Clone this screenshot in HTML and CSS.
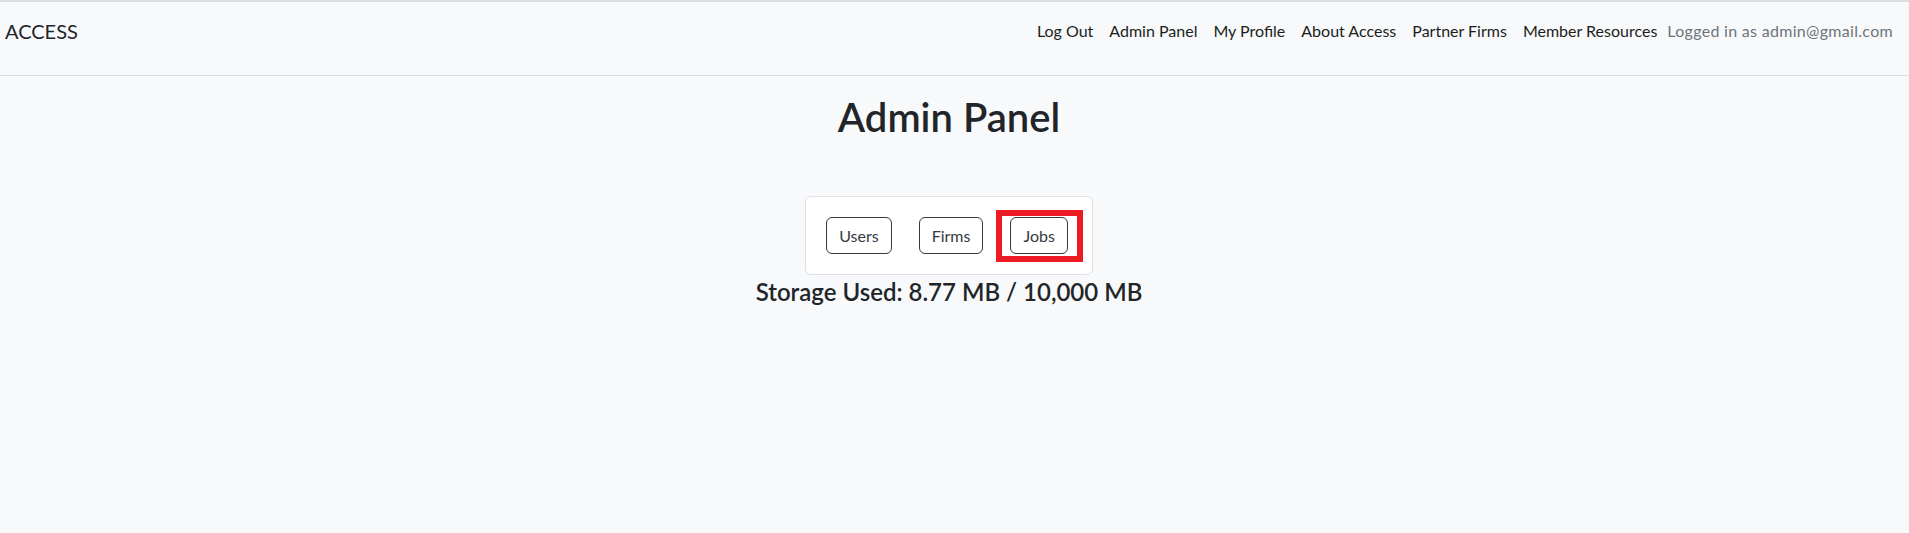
FILE: index.html
```html
<!DOCTYPE html>
<html lang="en">
<head>
<meta charset="utf-8">
<title>Admin Panel</title>
<link rel="stylesheet" href="styles.css">
</head>
<body>
<header class="navbar">
  <a class="brand" href="#">ACCESS</a>
  <nav class="nav">
    <a class="nav-link" href="#">Log Out</a>
    <a class="nav-link" href="#">Admin Panel</a>
    <a class="nav-link" href="#">My Profile</a>
    <a class="nav-link" href="#">About Access</a>
    <a class="nav-link" href="#">Partner Firms</a>
    <a class="nav-link" href="#">Member Resources</a>
    <span class="nav-text">Logged in as admin@gmail.com</span>
  </nav>
</header>
<main class="main">
  <h1 class="title">Admin Panel</h1>
  <div class="panel">
    <button class="btn">Users</button>
    <button class="btn">Firms</button>
    <button class="btn btn-marked">Jobs</button>
  </div>
  <h4 class="storage">Storage Used: 8.77 MB / 10,000 MB</h4>
</main>
</body>
</html>
```

FILE: styles.css
```css
html, body {
  margin: 0;
  background: #f8f9fa;
}
body {
  font-family: Lato, "Open Sans", sans-serif;
  color: #212529;
  min-height: 533px;
}
.navbar {
  display: flex;
  justify-content: space-between;
  align-items: flex-start;
  height: 73px;
  padding: 0 16px 0 5px;
  border-top: 2px solid #dcdde0;
  border-bottom: 1px solid #dcdfe2;
  background: #f8f9fa;
}
.brand {
  margin-top: 14px;
  font-size: 20px;
  line-height: 30px;
  color: #212529;
  text-decoration: none;
}
.nav {
  display: flex;
  align-items: baseline;
  margin-top: 17px;
  font-size: 16px;
  line-height: 24px;
}
.nav-link {
  padding: 0 8px;
  color: #1b1e21;
  text-decoration: none;
}
.nav-text {
  padding-left: 2px;
  color: #6c757d;
  letter-spacing: 0.3px;
}
.main {
  display: flex;
  flex-direction: column;
  align-items: center;
  padding-right: 11px;
}
.title {
  margin: 17px 0 55px;
  font-size: 40px;
  line-height: 48px;
  font-weight: 600;
  color: #212529;
}
.panel {
  display: flex;
  gap: 27px;
  padding: 20px 24px 20px 20px;
  background: #fff;
  border: 1px solid #dee2e6;
  border-radius: 6px;
}
.btn {
  position: relative;
  display: inline-flex;
  align-items: center;
  justify-content: center;
  box-sizing: border-box;
  height: 37px;
  padding: 0 12px;
  font-family: inherit;
  font-size: 16px;
  color: #343a40;
  background: transparent;
  border: 1px solid #343a40;
  border-radius: 6px;
  cursor: pointer;
}
.btn-marked::after {
  content: "";
  position: absolute;
  top: -8px;
  left: -15px;
  right: -16px;
  bottom: -9px;
  border: 6px solid #ed1c24;
}
.storage {
  margin: 2px 0 0;
  font-size: 24px;
  line-height: 29px;
  font-weight: 600;
  color: #212529;
}
```
